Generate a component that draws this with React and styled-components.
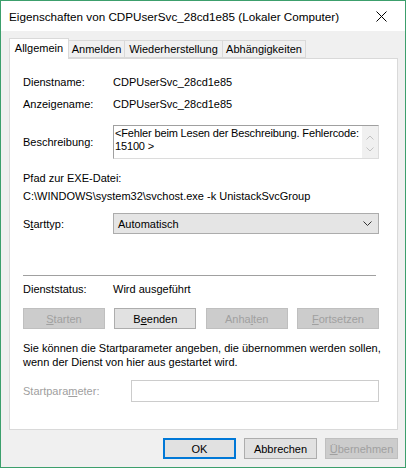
import React from 'react'
import styled, { createGlobalStyle } from 'styled-components'

const Global = createGlobalStyle`
    html, body {
        margin: 0;
        padding: 0;
        background: #ffffff;
    }
    * {
        box-sizing: border-box;
    }
`

const App = () => {
    return (
        <>
            <Global />
            <Window>
                <TitleBar>
                    <Title>Eigenschaften von CDPUserSvc_28cd1e85 (Lokaler Computer)</Title>
                    <Close>
                        <svg width="11" height="11" viewBox="0 0 11 11">
                            <path d="M0.5 0.5 L10.5 10.5 M10.5 0.5 L0.5 10.5" stroke="#000" strokeWidth="1" fill="none" />
                        </svg>
                    </Close>
                </TitleBar>

                <Body>
                    <Tabs>
                        <Tab active width={60}>Allgemein</Tab>
                        <Tab width={57}>Anmelden</Tab>
                        <Tab width={99}>Wiederherstellung</Tab>
                        <Tab width={84}>Abhängigkeiten</Tab>
                    </Tabs>

                    <Panel>
                        <Row top={16}>
                            <Label>Dienstname:</Label>
                            <Value>CDPUserSvc_28cd1e85</Value>
                        </Row>
                        <Row top={8}>
                            <Label>Anzeigename:</Label>
                            <Value>CDPUserSvc_28cd1e85</Value>
                        </Row>
                        <Row top={14}>
                            <Label>Beschreibung:</Label>
                            <TextArea>
                                <TextBody>&lt;Fehler beim Lesen der Beschreibung. Fehlercode:<br />15100 &gt;</TextBody>
                                <ScrollBar>
                                    <svg width="8" height="5" viewBox="0 0 8 5">
                                        <path d="M0.5 4.5 L4 1 L7.5 4.5" stroke="#c2c2c2" fill="none" />
                                    </svg>
                                    <svg width="8" height="5" viewBox="0 0 8 5">
                                        <path d="M0.5 0.5 L4 4 L7.5 0.5" stroke="#c2c2c2" fill="none" />
                                    </svg>
                                </ScrollBar>
                            </TextArea>
                        </Row>

                        <PathBlock>
                            <div>Pfad zur EXE-Datei:</div>
                            <div>C:\WINDOWS\system32\svchost.exe -k UnistackSvcGroup</div>
                        </PathBlock>

                        <Row top={8}>
                            <Label>S<u>t</u>arttyp:</Label>
                            <Select>
                                <span>Automatisch</span>
                                <svg width="9" height="5" viewBox="0 0 9 5">
                                    <path d="M0.5 0.5 L4.5 4.5 L8.5 0.5" stroke="#333" fill="none" />
                                </svg>
                            </Select>
                        </Row>

                        <Separator />

                        <Row top={6}>
                            <Label>Dienststatus:</Label>
                            <Value>Wird ausgeführt</Value>
                        </Row>

                        <ServiceButtons>
                            <Button disabled><u>S</u>tarten</Button>
                            <Button>B<u>e</u>enden</Button>
                            <Button disabled>Anha<u>l</u>ten</Button>
                            <Button disabled><u>F</u>ortsetzen</Button>
                        </ServiceButtons>

                        <Hint>
                            Sie können die Startparameter angeben, die übernommen werden sollen,<br />
                            wenn der Dienst von hier aus gestartet wird.
                        </Hint>

                        <Row top={11}>
                            <Label muted wide>Startpara<u>m</u>eter:</Label>
                            <Input />
                        </Row>
                    </Panel>

                    <Footer>
                        <DialogButton primary>OK</DialogButton>
                        <DialogButton>Abbrechen</DialogButton>
                        <DialogButton disabled><u>Ü</u>bernehmen</DialogButton>
                    </Footer>
                </Body>
            </Window>
        </>
    )
}


const Window = styled.div`
    width: 406px;
    height: 468px;
    border: 1px solid #3c9f6c;
    background: #f0f0f0;
    display: flex;
    flex-direction: column;
    font-family: "Liberation Sans", Arial, sans-serif;
    font-size: 11px;
    color: #000;
    overflow: hidden;
`

const TitleBar = styled.div`
    height: 30px;
    background: #ffffff;
    display: flex;
    align-items: center;
    justify-content: space-between;
    padding-left: 8px;
`

const Title = styled.div`
    font-size: 11.7px;
    white-space: nowrap;
`

const Close = styled.div`
    width: 45px;
    height: 30px;
    display: flex;
    align-items: center;
    justify-content: center;
    margin-right: 1px;
`

const Body = styled.div`
    flex: 1;
    padding: 7px 7px 0 8px;
    display: flex;
    flex-direction: column;
`

const Tabs = styled.div`
    display: flex;
    align-items: flex-end;
    height: 20px;
    position: relative;
    z-index: 1;
`

const Tab = styled.div`
    width: ${p => p.width}px;
    height: ${p => p.active ? '21px' : '18px'};
    padding-bottom: ${p => p.active ? '2px' : '0'};
    margin-bottom: ${p => p.active ? '-1px' : '0'};
    margin-left: ${p => p.active ? '0' : '-1px'};
    background: ${p => p.active ? '#ffffff' : '#f0f0f0'};
    border: 1px solid #d9d9d9;
    border-bottom: ${p => p.active ? 'none' : '1px solid #d9d9d9'};
    display: flex;
    align-items: center;
    justify-content: center;
    line-height: 14px;
    white-space: nowrap;
`

const Panel = styled.div`
    height: 372px;
    background: #ffffff;
    border: 1px solid #d9d9d9;
    padding: 0 18px 0 13px;
    display: flex;
    flex-direction: column;
`

const Row = styled.div`
    display: flex;
    align-items: center;
    margin-top: ${p => p.top}px;
    line-height: 14px;
`

const Label = styled.div`
    width: ${p => p.wide ? '108px' : '90px'};
    flex-shrink: 0;
    color: ${p => p.muted ? '#a0a0a0' : '#000'};
`

const Value = styled.div`
    white-space: nowrap;
`

const TextArea = styled.div`
    flex: 1;
    height: 34px;
    display: flex;
    border: 1px solid;
    border-color: #a0a0a0 #dcdcdc #dcdcdc #a0a0a0;
    background: #ffffff;
`

const TextBody = styled.div`
    flex: 1;
    padding: 1px 1px 0;
    line-height: 13px;
    white-space: nowrap;
    letter-spacing: -0.15px;
`

const ScrollBar = styled.div`
    width: 16px;
    flex-shrink: 0;
    background: #f0f0f0;
    display: flex;
    flex-direction: column;
    align-items: center;
    justify-content: space-around;
    padding: 5px 0 3px;
`

const PathBlock = styled.div`
    margin-top: 10px;
    line-height: 18px;
    white-space: nowrap;
`

const Select = styled.div`
    flex: 1;
    height: 21px;
    background: #e5e5e5;
    border: 1px solid #acacac;
    display: flex;
    align-items: center;
    justify-content: space-between;
    padding: 0 6px 0 4px;
`

const Separator = styled.div`
    height: 1px;
    background: #a0a0a0;
    margin: 41px 3px 0 0;
`

const ServiceButtons = styled.div`
    display: flex;
    justify-content: space-between;
    margin-top: 12px;
`

const Button = styled.div`
    width: 82px;
    height: 21px;
    display: flex;
    align-items: center;
    justify-content: center;
    background: ${p => p.disabled ? '#cccccc' : '#e1e1e1'};
    border: 1px solid ${p => p.disabled ? '#bfbfbf' : '#adadad'};
    color: ${p => p.disabled ? '#a0a0a0' : '#000'};
`

const Hint = styled.div`
    margin-top: 12px;
    line-height: 14px;
    white-space: nowrap;
`

const Input = styled.div`
    flex: 1;
    height: 22px;
    background: #ffffff;
    border: 1px solid #cccccc;
`

const Footer = styled.div`
    display: flex;
    justify-content: flex-end;
    gap: 8px;
    margin-top: 8px;
`

const DialogButton = styled.div`
    width: 73px;
    height: 21px;
    display: flex;
    align-items: center;
    justify-content: center;
    background: ${p => p.disabled ? '#cccccc' : '#e1e1e1'};
    border: ${p => p.primary ? '2px solid #0078d7' : p.disabled ? '1px solid #bfbfbf' : '1px solid #adadad'};
    color: ${p => p.disabled ? '#a0a0a0' : '#000'};
`


export default App
